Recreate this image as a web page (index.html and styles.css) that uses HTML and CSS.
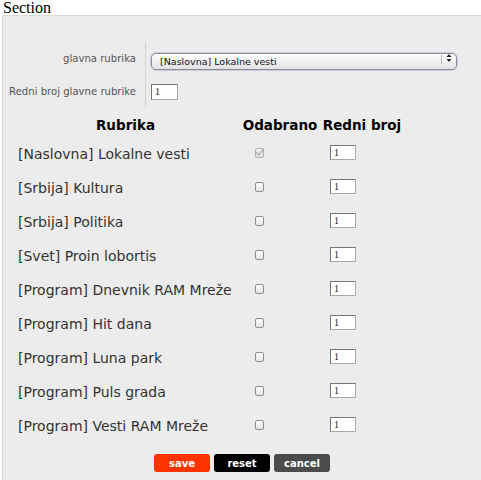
FILE: index.html
```html
<!DOCTYPE html>
<html lang="sr">

<head>
    <meta charset="UTF-8">
    <meta name="viewport" content="width=device-width, initial-scale=1.0">
    <title>Section</title>
    <link rel="stylesheet" href="styles.css">
</head>

<body>
    <div class="title">Section</div>
    <form class="panel">
        <div class="fields">
            <label class="field-label" for="glavna">glavna rubrika</label>
            <div class="field">
                <div class="select-wrap">
                    <select id="glavna" name="glavna">
                        <option>[Naslovna] Lokalne vesti</option>
                        <option>[Srbija] Kultura</option>
                        <option>[Srbija] Politika</option>
                    </select>
                    <svg class="stepper" width="12" height="12" viewBox="0 0 12 12">
                        <path d="M6 2 L8.5 5 H3.5 Z M6 10 L8.5 7 H3.5 Z" fill="#222"/>
                    </svg>
                </div>
            </div>
            <label class="field-label" for="redni">Redni broj glavne rubrike</label>
            <div class="field">
                <input class="num" type="text" id="redni" name="redni" value="1">
            </div>
        </div>

        <table class="rubrike">
            <thead>
                <tr>
                    <th class="col-name">Rubrika</th>
                    <th class="col-check">Odabrano</th>
                    <th class="col-num">Redni broj</th>
                </tr>
            </thead>
            <tbody>
                <tr>
                    <td>[Naslovna] Lokalne vesti</td>
                    <td><input class="check" type="checkbox" checked disabled></td>
                    <td><input class="num" type="text" value="1"></td>
                </tr>
                <tr>
                    <td>[Srbija] Kultura</td>
                    <td><input class="check" type="checkbox"></td>
                    <td><input class="num" type="text" value="1"></td>
                </tr>
                <tr>
                    <td>[Srbija] Politika</td>
                    <td><input class="check" type="checkbox"></td>
                    <td><input class="num" type="text" value="1"></td>
                </tr>
                <tr>
                    <td>[Svet] Proin lobortis</td>
                    <td><input class="check" type="checkbox"></td>
                    <td><input class="num" type="text" value="1"></td>
                </tr>
                <tr>
                    <td>[Program] Dnevnik RAM Mreže</td>
                    <td><input class="check" type="checkbox"></td>
                    <td><input class="num" type="text" value="1"></td>
                </tr>
                <tr>
                    <td>[Program] Hit dana</td>
                    <td><input class="check" type="checkbox"></td>
                    <td><input class="num" type="text" value="1"></td>
                </tr>
                <tr>
                    <td>[Program] Luna park</td>
                    <td><input class="check" type="checkbox"></td>
                    <td><input class="num" type="text" value="1"></td>
                </tr>
                <tr>
                    <td>[Program] Puls grada</td>
                    <td><input class="check" type="checkbox"></td>
                    <td><input class="num" type="text" value="1"></td>
                </tr>
                <tr>
                    <td>[Program] Vesti RAM Mreže</td>
                    <td><input class="check" type="checkbox"></td>
                    <td><input class="num" type="text" value="1"></td>
                </tr>
            </tbody>
        </table>

        <div class="buttons">
            <button type="submit" class="btn save">save</button>
            <button type="reset" class="btn reset">reset</button>
            <button type="button" class="btn cancel">cancel</button>
        </div>
    </form>
</body>

</html>
```

FILE: styles.css
```css
html {
    overflow: hidden;
}

body {
    margin: 0;
    padding: 0 0 0 2px;
    background: #fff;
    font-family: "DejaVu Sans", Verdana, sans-serif;
}

.title {
    font-family: "Liberation Serif", "Times New Roman", serif;
    font-size: 16px;
    line-height: 15px;
    height: 15px;
    padding-left: 1px;
    color: #000;
}

.panel {
    width: 500px;
    height: 480px;
    box-sizing: border-box;
    background: #ececec;
    border: 1px solid #d9d9d9;
    padding-top: 26px;
}

/* top fields */
.fields {
    display: grid;
    grid-template-columns: 143px 1fr;
    grid-auto-rows: 33px;
}

.field-label {
    display: flex;
    align-items: center;
    justify-content: flex-end;
    padding-right: 9px;
    border-right: 1px solid #d4d4d4;
    font-size: 10.1px;
    color: #555;
}

.field {
    display: flex;
    align-items: center;
    padding-left: 5px;
}

.select-wrap {
    position: relative;
    width: 306px;
    height: 17px;
}

.select-wrap select {
    appearance: none;
    width: 100%;
    height: 17px;
    margin: 0;
    padding: 0 0 0 8px;
    border: 1px solid #8a8f99;
    border-radius: 5px;
    background: linear-gradient(#ffffff, #f0f0f0 50%, #e2e2e2);
    box-shadow: 0 0 0 1px #c6cbd6;
    font-family: "DejaVu Sans", Verdana, sans-serif;
    font-size: 9.5px;
    color: #111;
}

.stepper {
    position: absolute;
    right: 2px;
    top: 2px;
    width: 12px;
    height: 12px;
    border-left: 1px solid #b5b9c2;
    padding-left: 1px;
    pointer-events: none;
}

.num {
    box-sizing: border-box;
    width: 26px;
    height: 15px;
    margin: 0;
    padding: 0 0 0 3px;
    border: 1px solid #777;
    border-right-color: #aaa;
    border-bottom-color: #aaa;
    background: #fff;
    font-family: "Liberation Serif", "Times New Roman", serif;
    font-size: 10px;
    color: #222;
}

.field .num {
    width: 27px;
    height: 16px;
}

/* rubrike table */
.rubrike {
    table-layout: fixed;
    border-collapse: collapse;
    margin-left: 7px;
    margin-top: 4px;
}

.rubrike th {
    height: 25px;
    padding: 0;
    font-size: 13.5px;
    font-weight: bold;
    color: #000;
    text-align: center;
    vertical-align: middle;
    white-space: nowrap;
}

.rubrike td {
    height: 34px;
    padding: 0;
    font-size: 14px;
    color: #333;
    vertical-align: middle;
    white-space: nowrap;
}

.col-name {
    width: 231px;
}

.col-check {
    width: 78px;
}

.col-num {
    width: 86px;
}

.rubrike td:first-child {
    padding-left: 8px;
}

.rubrike td:nth-child(2) {
    padding-left: 14px;
}

.rubrike td:nth-child(3) {
    padding-left: 11px;
}

.check {
    appearance: none;
    position: relative;
    display: block;
    box-sizing: border-box;
    width: 9px;
    height: 10px;
    margin: -3px 0 0 0;
    border: 1px solid #8f8f8f;
    border-radius: 2px;
    background: linear-gradient(#fdfdfd, #e4e4e4);
}

.check:checked {
    border-color: #b0b0b0;
    background: linear-gradient(#f2f2f2, #e0e0e0);
}

.check:checked::after {
    content: "";
    position: absolute;
    left: 2px;
    top: -2px;
    width: 3px;
    height: 7px;
    border: solid #999;
    border-width: 0 1.5px 1.5px 0;
    transform: rotate(40deg);
}

.rubrike td:nth-child(3) .num {
    display: block;
    margin-top: -4px;
}

/* buttons */
.buttons {
    display: flex;
    justify-content: center;
    gap: 4px;
    width: 481px;
    margin-top: 11px;
    padding-right: 3px;
    box-sizing: border-box;
}

.btn {
    width: 56px;
    height: 18px;
    padding: 0;
    border: 0;
    border-radius: 3px;
    font-family: "DejaVu Sans", Verdana, sans-serif;
    font-size: 10px;
    font-weight: bold;
    color: #fff;
}

.save {
    background: #ff3300;
}

.reset {
    background: #000;
}

.cancel {
    background: #4b4b4b;
}
```
